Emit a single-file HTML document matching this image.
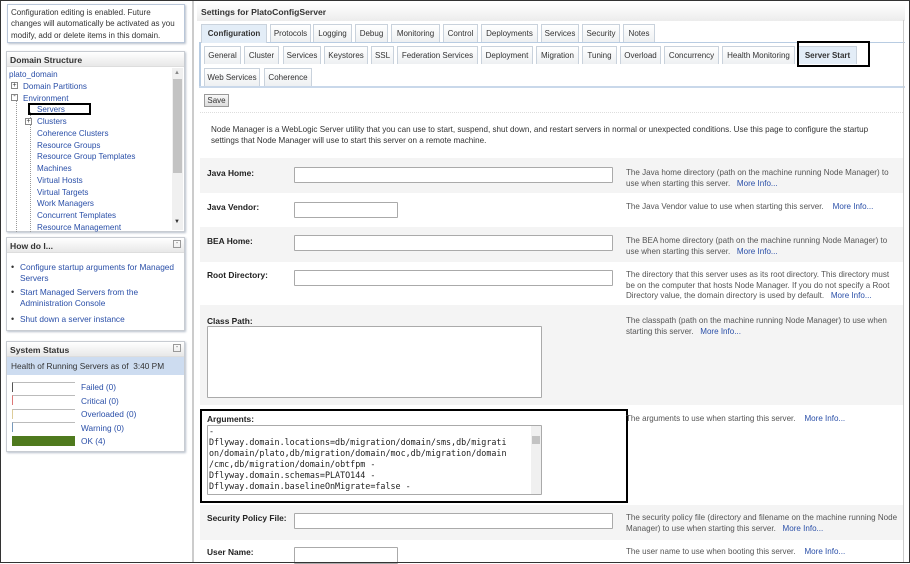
<!DOCTYPE html>
<html><head><meta charset="utf-8"><style>
*{margin:0;padding:0;box-sizing:border-box}
body{width:910px;height:563px;overflow:hidden;background:#fff;font-family:"Liberation Sans",sans-serif;font-size:8.3px;color:#333;position:relative}
.a{position:absolute;white-space:nowrap}
.box{position:absolute;border:1px solid #c8ccd2;background:#fff;box-shadow:1px 1px 2px #b8c0cc}
.hd{position:absolute;left:0;right:0;top:0;height:15px;background:linear-gradient(#fff,#e8e8e8);border-bottom:1px solid #ddd;font-weight:bold;font-size:8.6px;padding:3px 0 0 3px;color:#333}
.lk{color:#2a4fa8}
.tab{position:absolute;height:18px;border:1px solid #c9d2dc;border-bottom:none;background:linear-gradient(#fff,#eef0f2);text-align:center;padding-top:4px;font-size:8px;color:#333}
.inp{position:absolute;border:1px solid #aaa;background:#fff;border-radius:1px}
.lbl{position:absolute;font-weight:bold;font-size:8.4px;color:#222}
.row{position:absolute;left:200px;width:703px}
.g{background:#f4f4f4}
.ds{position:absolute;left:626px;color:#555;font-size:8.05px;line-height:10.5px;white-space:nowrap}
.bar{position:absolute;left:12px;width:63px;height:10px;border-top:1px solid #bbb}
</style></head><body>
<div style="position:absolute;inset:0;border:1px solid #333;z-index:9;pointer-events:none"></div>
<div class="a" style="left:192px;top:0;width:2px;height:563px;background:#ccc"></div>

<div class="box" style="left:7px;top:4px;width:178px;height:39px;border-color:#b9c6d8"></div>
<div class="a" style="left:11px;top:7px;line-height:11.3px;color:#333;font-size:8px">Configuration editing is enabled. Future<br>changes will automatically be activated as you<br>modify, add or delete items in this domain.</div>

<div class="box" style="left:6px;top:51px;width:179px;height:181px"><div class="hd">Domain Structure</div></div>
<div class="a" style="left:172px;top:68px;width:11px;height:162px;background:#f0f0f0"></div>
<div class="a" style="left:173px;top:79px;width:9px;height:94px;background:#c3c3c3"></div>
<div class="a" style="left:174px;top:70px;font-size:6px;color:#888">▲</div>
<div class="a" style="left:174px;top:219px;font-size:6px;color:#333">▼</div>
<div class="a" style="left:16px;top:95px;width:0;height:137px;border-left:1px dotted #999"></div>
<div class="a" style="left:30px;top:112px;width:0;height:120px;border-left:1px dotted #999"></div>
<div class="a lk" style="left:9px;top:69px;line-height:11.75px;font-size:8.1px">plato_domain<br><span style="margin-left:14px">Domain Partitions</span><br><span style="margin-left:14px">Environment</span><br><span style="margin-left:28px">Servers</span><br><span style="margin-left:28px">Clusters</span><br><span style="margin-left:28px">Coherence Clusters</span><br><span style="margin-left:28px">Resource Groups</span><br><span style="margin-left:28px">Resource Group Templates</span><br><span style="margin-left:28px">Machines</span><br><span style="margin-left:28px">Virtual Hosts</span><br><span style="margin-left:28px">Virtual Targets</span><br><span style="margin-left:28px">Work Managers</span><br><span style="margin-left:28px">Concurrent Templates</span><br><span style="margin-left:28px">Resource Management</span></div>
<div class="a" style="left:11px;top:82px;width:7px;height:7px;border:1px solid #888;background:#fff;font-size:7px;line-height:5px;text-align:center">+</div>
<div class="a" style="left:11px;top:94px;width:7px;height:7px;border:1px solid #888;background:#fff;font-size:7px;line-height:4px;text-align:center">-</div>
<div class="a" style="left:25px;top:118px;width:7px;height:7px;border:1px solid #888;background:#fff;font-size:7px;line-height:5px;text-align:center">+</div>
<div class="a" style="left:28px;top:103px;width:63px;height:12px;border:2px solid #000"></div>

<div class="box" style="left:6px;top:237px;width:179px;height:94px"><div class="hd">How do I...</div></div>
<div class="a" style="left:173px;top:240px;width:8px;height:8px;border:1px solid #999;font-size:7px;line-height:5px;text-align:center;color:#666">-</div>
<div class="a lk" style="left:20px;top:262px;line-height:10.5px">Configure startup arguments for Managed<br>Servers</div>
<div class="a lk" style="left:20px;top:287px;line-height:10.5px">Start Managed Servers from the<br>Administration Console</div>
<div class="a lk" style="left:20px;top:314px">Shut down a server instance</div>
<div class="a" style="left:11px;top:262px;line-height:10.5px;font-size:9px">•</div>
<div class="a" style="left:11px;top:287px;font-size:9px">•</div>
<div class="a" style="left:11px;top:314px;font-size:9px">•</div>

<div class="box" style="left:6px;top:341px;width:179px;height:111px"><div class="hd">System Status</div></div>
<div class="a" style="left:173px;top:344px;width:8px;height:8px;border:1px solid #999;font-size:7px;line-height:5px;text-align:center;color:#666">-</div>
<div class="a" style="left:7px;top:357px;width:177px;height:18px;background:#cddcf0;padding:4px 0 0 4px;color:#333">Health of Running Servers as of &nbsp;3:40 PM</div>
<div class="bar" style="top:382px;border-left:1px solid #555"></div>
<div class="bar" style="top:395px;border-left:1px solid #d77"></div>
<div class="bar" style="top:409px;border-left:1px solid #dc9"></div>
<div class="bar" style="top:422px;border-left:1px solid #79b"></div>
<div class="a" style="left:12px;top:436px;width:63px;height:10px;background:#4f7a1e"></div>
<div class="a lk" style="left:81px;top:381px;line-height:13.5px">Failed (0)<br>Critical (0)<br>Overloaded (0)<br>Warning (0)<br>OK (4)</div>

<div class="a" style="left:197px;top:3px;width:708px;height:18px;background:linear-gradient(#fff,#ececec);font-weight:bold;padding:4px 0 0 4px;font-size:8.6px;color:#333">Settings for PlatoConfigServer</div>
<div class="a" style="left:199px;top:42px;width:706px;height:1px;background:#b8cce2"></div>
<div class="a" style="left:199px;top:42px;width:2px;height:46px;background:#b8cce2"></div>
<div class="tab" style="left:201px;top:24px;width:66px;font-weight:bold;background:#e3edf7;height:19px">Configuration</div>
<div class="tab" style="left:270px;top:24px;width:41px">Protocols</div>
<div class="tab" style="left:313px;top:24px;width:39px">Logging</div>
<div class="tab" style="left:355px;top:24px;width:33px">Debug</div>
<div class="tab" style="left:391px;top:24px;width:49px">Monitoring</div>
<div class="tab" style="left:443px;top:24px;width:35px">Control</div>
<div class="tab" style="left:481px;top:24px;width:57px">Deployments</div>
<div class="tab" style="left:541px;top:24px;width:38px">Services</div>
<div class="tab" style="left:582px;top:24px;width:38px">Security</div>
<div class="tab" style="left:623px;top:24px;width:32px">Notes</div>

<div class="tab" style="left:204px;top:46px;width:37px">General</div>
<div class="tab" style="left:244px;top:46px;width:35px">Cluster</div>
<div class="tab" style="left:283px;top:46px;width:38px">Services</div>
<div class="tab" style="left:324px;top:46px;width:44px">Keystores</div>
<div class="tab" style="left:371px;top:46px;width:23px">SSL</div>
<div class="tab" style="left:397px;top:46px;width:81px">Federation Services</div>
<div class="tab" style="left:481px;top:46px;width:52px">Deployment</div>
<div class="tab" style="left:536px;top:46px;width:43px">Migration</div>
<div class="tab" style="left:582px;top:46px;width:35px">Tuning</div>
<div class="tab" style="left:620px;top:46px;width:41px">Overload</div>
<div class="tab" style="left:664px;top:46px;width:55px">Concurrency</div>
<div class="tab" style="left:722px;top:46px;width:73px">Health Monitoring</div>
<div class="tab" style="left:798px;top:46px;width:59px;font-weight:bold;background:#e3edf7">Server Start</div>
<div class="a" style="left:797px;top:41px;width:73px;height:26px;border:2px solid #000"></div>
<div class="tab" style="left:204px;top:68px;width:56px">Web Services</div>
<div class="tab" style="left:264px;top:68px;width:48px">Coherence</div>
<div class="a" style="left:199px;top:86px;width:706px;height:2px;background:#c9d8ea"></div>

<div class="a" style="left:204px;top:94px;width:25px;height:13px;border:1px solid #999;background:linear-gradient(#f8f8f8,#ddd);font-size:8px;text-align:center;padding-top:1px">Save</div>
<div class="a" style="left:200px;top:112px;width:703px;border-top:1px dotted #ddd"></div>
<div class="a" style="left:211px;top:125px;line-height:10.5px;font-size:8.1px">Node Manager is a WebLogic Server utility that you can use to start, suspend, shut down, and restart servers in normal or unexpected conditions. Use this page to configure the startup<br>settings that Node Manager will use to start this server on a remote machine.</div>

<div class="row g" style="top:158px;height:35px"></div>
<div class="row g" style="top:227px;height:35px"></div>
<div class="row g" style="top:305px;height:100px"></div>
<div class="row g" style="top:505px;height:35px"></div>

<div class="lbl" style="left:207px;top:168px">Java Home:</div>
<div class="inp" style="left:294px;top:167px;width:319px;height:16px"></div>
<div class="ds" style="top:168px">The Java home directory (path on the machine running Node Manager) to<br>use when starting this server. &nbsp; <span class="lk">More Info...</span></div>

<div class="lbl" style="left:207px;top:202px">Java Vendor:</div>
<div class="inp" style="left:294px;top:202px;width:104px;height:16px"></div>
<div class="ds" style="top:202px">The Java Vendor value to use when starting this server. &nbsp; &nbsp;<span class="lk">More Info...</span></div>

<div class="lbl" style="left:207px;top:236px">BEA Home:</div>
<div class="inp" style="left:294px;top:235px;width:319px;height:16px"></div>
<div class="ds" style="top:236px">The BEA home directory (path on the machine running Node Manager) to<br>use when starting this server. &nbsp; <span class="lk">More Info...</span></div>

<div class="lbl" style="left:207px;top:270px">Root Directory:</div>
<div class="inp" style="left:294px;top:270px;width:319px;height:16px"></div>
<div class="ds" style="top:270px">The directory that this server uses as its root directory. This directory must<br>be on the computer that hosts Node Manager. If you do not specify a Root<br>Directory value, the domain directory is used by default. &nbsp; <span class="lk">More Info...</span></div>

<div class="lbl" style="left:207px;top:316px">Class Path:</div>
<div class="inp" style="left:207px;top:326px;width:335px;height:72px"></div>
<div class="ds" style="top:316px">The classpath (path on the machine running Node Manager) to use when<br>starting this server. &nbsp; <span class="lk">More Info...</span></div>

<div class="a" style="left:200px;top:409px;width:428px;height:94px;border:2px solid #000"></div>
<div class="lbl" style="left:207px;top:414px">Arguments:</div>
<div class="inp" style="left:207px;top:425px;width:335px;height:70px;overflow:hidden"></div>
<div class="a" style="left:209px;top:426px;font-family:'DejaVu Sans Mono','Liberation Mono',monospace;font-size:8.4px;line-height:11px;color:#222">-<br>Dflyway.domain.locations=db/migration/domain/sms,db/migrati<br>on/domain/plato,db/migration/domain/moc,db/migration/domain<br>/cmc,db/migration/domain/obtfpm -<br>Dflyway.domain.schemas=PLATO144 -<br>Dflyway.domain.baselineOnMigrate=false -</div>
<div class="a" style="left:531px;top:426px;width:10px;height:68px;background:#f0f0f0"></div>
<div class="a" style="left:532px;top:436px;width:8px;height:8px;background:#c3c3c3"></div>
<div class="ds" style="top:414px">The arguments to use when starting this server. &nbsp; &nbsp;<span class="lk">More Info...</span></div>

<div class="lbl" style="left:207px;top:513px">Security Policy File:</div>
<div class="inp" style="left:294px;top:513px;width:319px;height:16px"></div>
<div class="ds" style="top:513px">The security policy file (directory and filename on the machine running Node<br>Manager) to use when starting this server. &nbsp; <span class="lk">More Info...</span></div>

<div class="lbl" style="left:207px;top:547px">User Name:</div>
<div class="inp" style="left:294px;top:547px;width:104px;height:17px"></div>
<div class="ds" style="top:547px">The user name to use when booting this server. &nbsp; &nbsp;<span class="lk">More Info...</span></div>
<div class="a" style="left:903px;top:20px;width:1px;height:543px;background:#ccc"></div>
</body></html>
